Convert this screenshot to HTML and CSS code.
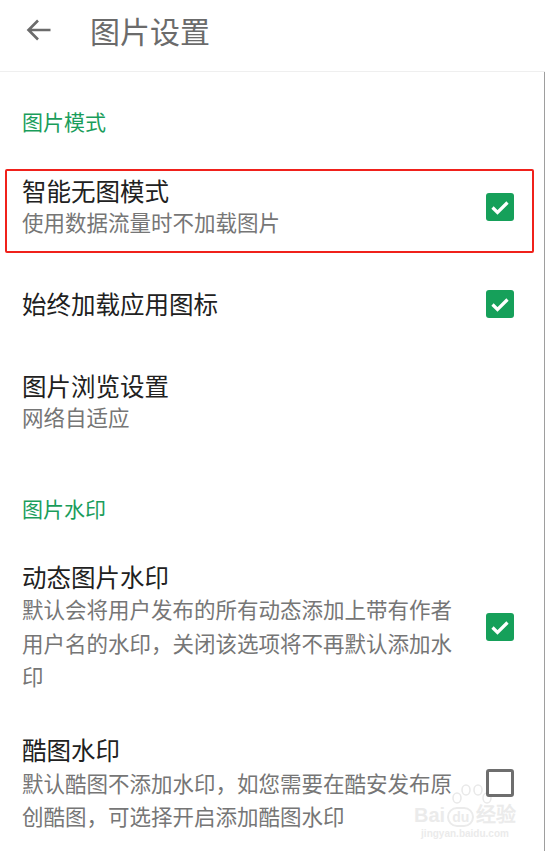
FILE: index.html
```html
<!DOCTYPE html>
<html lang="zh-CN">
<head>
    <meta charset="UTF-8">
    <meta name="viewport" content="width=device-width, initial-scale=1.0">
    <title>图片设置</title>
    <link rel="stylesheet" href="styles.css">
</head>
<body>

    <div class="app">
        <header class="toolbar">
            <svg class="back" width="26" height="24" viewBox="0 0 26 24">
                <path d="M24.5 12H3M12 2.5L2.5 12l9.5 9.5" fill="none" stroke="#6b6b6b" stroke-width="2.6"/>
            </svg>
            <h1>图片设置</h1>
        </header>

        <main class="list">
            <!-- faint site watermark in the bottom corner -->
            <div class="watermark">
                <svg class="paw" width="44" height="26" viewBox="0 0 44 26">
                    <g fill="none" stroke="#e9e9e9" stroke-width="1.6">
                        <ellipse cx="7" cy="14" rx="4" ry="5"/>
                        <ellipse cx="16" cy="6" rx="4" ry="5"/>
                        <ellipse cx="28" cy="6" rx="4" ry="5"/>
                        <ellipse cx="37" cy="14" rx="4" ry="5"/>
                    </g>
                </svg>
                <div class="wm-name">Bai<span class="du">du</span>经验</div>
                <div class="wm-url">jingyan.baidu.com</div>
            </div>

            <div class="section-title first">图片模式</div>

            <div class="item highlight">
                <div class="text">
                    <div class="title">智能无图模式</div>
                    <div class="summary">使用数据流量时不加载图片</div>
                </div>
                <span class="check on">
                    <svg width="28" height="28" viewBox="0 0 28 28"><path d="M6.5 14.5l5 5 10-10" fill="none" stroke="#fff" stroke-width="3.2"/></svg>
                </span>
            </div>

            <div class="item tall after-box">
                <div class="text">
                    <div class="title">始终加载应用图标</div>
                </div>
                <span class="check on">
                    <svg width="28" height="28" viewBox="0 0 28 28"><path d="M6.5 14.5l5 5 10-10" fill="none" stroke="#fff" stroke-width="3.2"/></svg>
                </span>
            </div>

            <div class="item tall">
                <div class="text">
                    <div class="title">图片浏览设置</div>
                    <div class="summary">网络自适应</div>
                </div>
            </div>

            <div class="section-title">图片水印</div>

            <div class="item">
                <div class="text">
                    <div class="title">动态图片水印</div>
                    <div class="summary long">默认会将用户发布的所有动态添加上带有作者用户名的水印，关闭该选项将不再默认添加水印</div>
                </div>
                <span class="check on">
                    <svg width="28" height="28" viewBox="0 0 28 28"><path d="M6.5 14.5l5 5 10-10" fill="none" stroke="#fff" stroke-width="3.2"/></svg>
                </span>
            </div>

            <div class="item">
                <div class="text">
                    <div class="title spaced">酷图水印</div>
                    <div class="summary long">默认酷图不添加水印，如您需要在酷安发布原创酷图，可选择开启添加酷图水印</div>
                </div>
                <span class="check off"></span>
            </div>
        </main>
    </div>

</body>
</html>
```

FILE: styles.css
```css
body {
    margin: 0;
    background-color: #fff;
    font-family: "Noto Sans CJK SC", "Noto Sans", sans-serif;
}
.app {
    width: 545px;
    height: 852px;
    overflow: hidden;
}
.toolbar {
    height: 72px;
    display: flex;
    align-items: center;
    padding: 0 0 11px 26px;
    box-sizing: border-box;
    border-bottom: 1px solid #efefef;
}
.toolbar h1 {
    margin: 0 0 0 38px;
    font-size: 30px;
    font-weight: normal;
    color: #6b6b6b;
    line-height: 40px;
}
.list {
    position: relative;
    width: 545px;
    height: 779px;
    box-sizing: border-box;
    border-right: 1px solid #9e9e9e;
}
.section-title {
    padding: 36px 22px 19px;
    font-size: 21px;
    line-height: 28px;
    color: #1a9d5b;
}
.section-title.first {
    padding-top: 35px;
    padding-bottom: 20px;
}
.item {
    position: relative;
    display: flex;
    align-items: center;
    justify-content: space-between;
    padding: 21px 30px 20px 22px;
}
.item.tall {
    padding-top: 26px;
    padding-bottom: 26px;
}
.item.after-box {
    margin-top: 10px;
}
.item.highlight {
    margin: 14px 10px 0 5px;
    padding: 5px 18px 14px 15px;
    border: 2px solid #f0211b;
    border-radius: 2px;
}
.text {
    width: 440px;
}
.title {
    font-size: 24.5px;
    line-height: 30px;
    color: #212121;
}
.title.spaced {
    line-height: 32px;
}
.summary {
    font-size: 21.5px;
    line-height: 31px;
    color: #767676;
}
.summary.long {
    line-height: 33.5px;
}
.check {
    flex: none;
    width: 28px;
    height: 28px;
    box-sizing: border-box;
    border-radius: 3px;
    background-color: #fff;
}
.check svg {
    display: block;
}
.check.on {
    background-color: #16a05a;
}
.check.off {
    border: 3px solid #6e6e6e;
}
.watermark {
    position: absolute;
    left: 414px;
    top: 712px;
    width: 102px;
    text-align: center;
    color: #ebebeb;
    font-family: "Liberation Sans", sans-serif;
}
.paw {
    display: block;
    margin: 0 auto -6px 36px;
}
.wm-name {
    font-size: 20px;
    font-weight: bold;
    line-height: 22px;
    white-space: nowrap;
}
.wm-name .du {
    display: inline-block;
    border: 2px solid #ebebeb;
    border-radius: 11px;
    padding: 0 3px;
    line-height: 16px;
    font-size: 14px;
    margin: 0 2px;
}
.wm-url {
    font-size: 10px;
    font-weight: bold;
    line-height: 14px;
}
```
